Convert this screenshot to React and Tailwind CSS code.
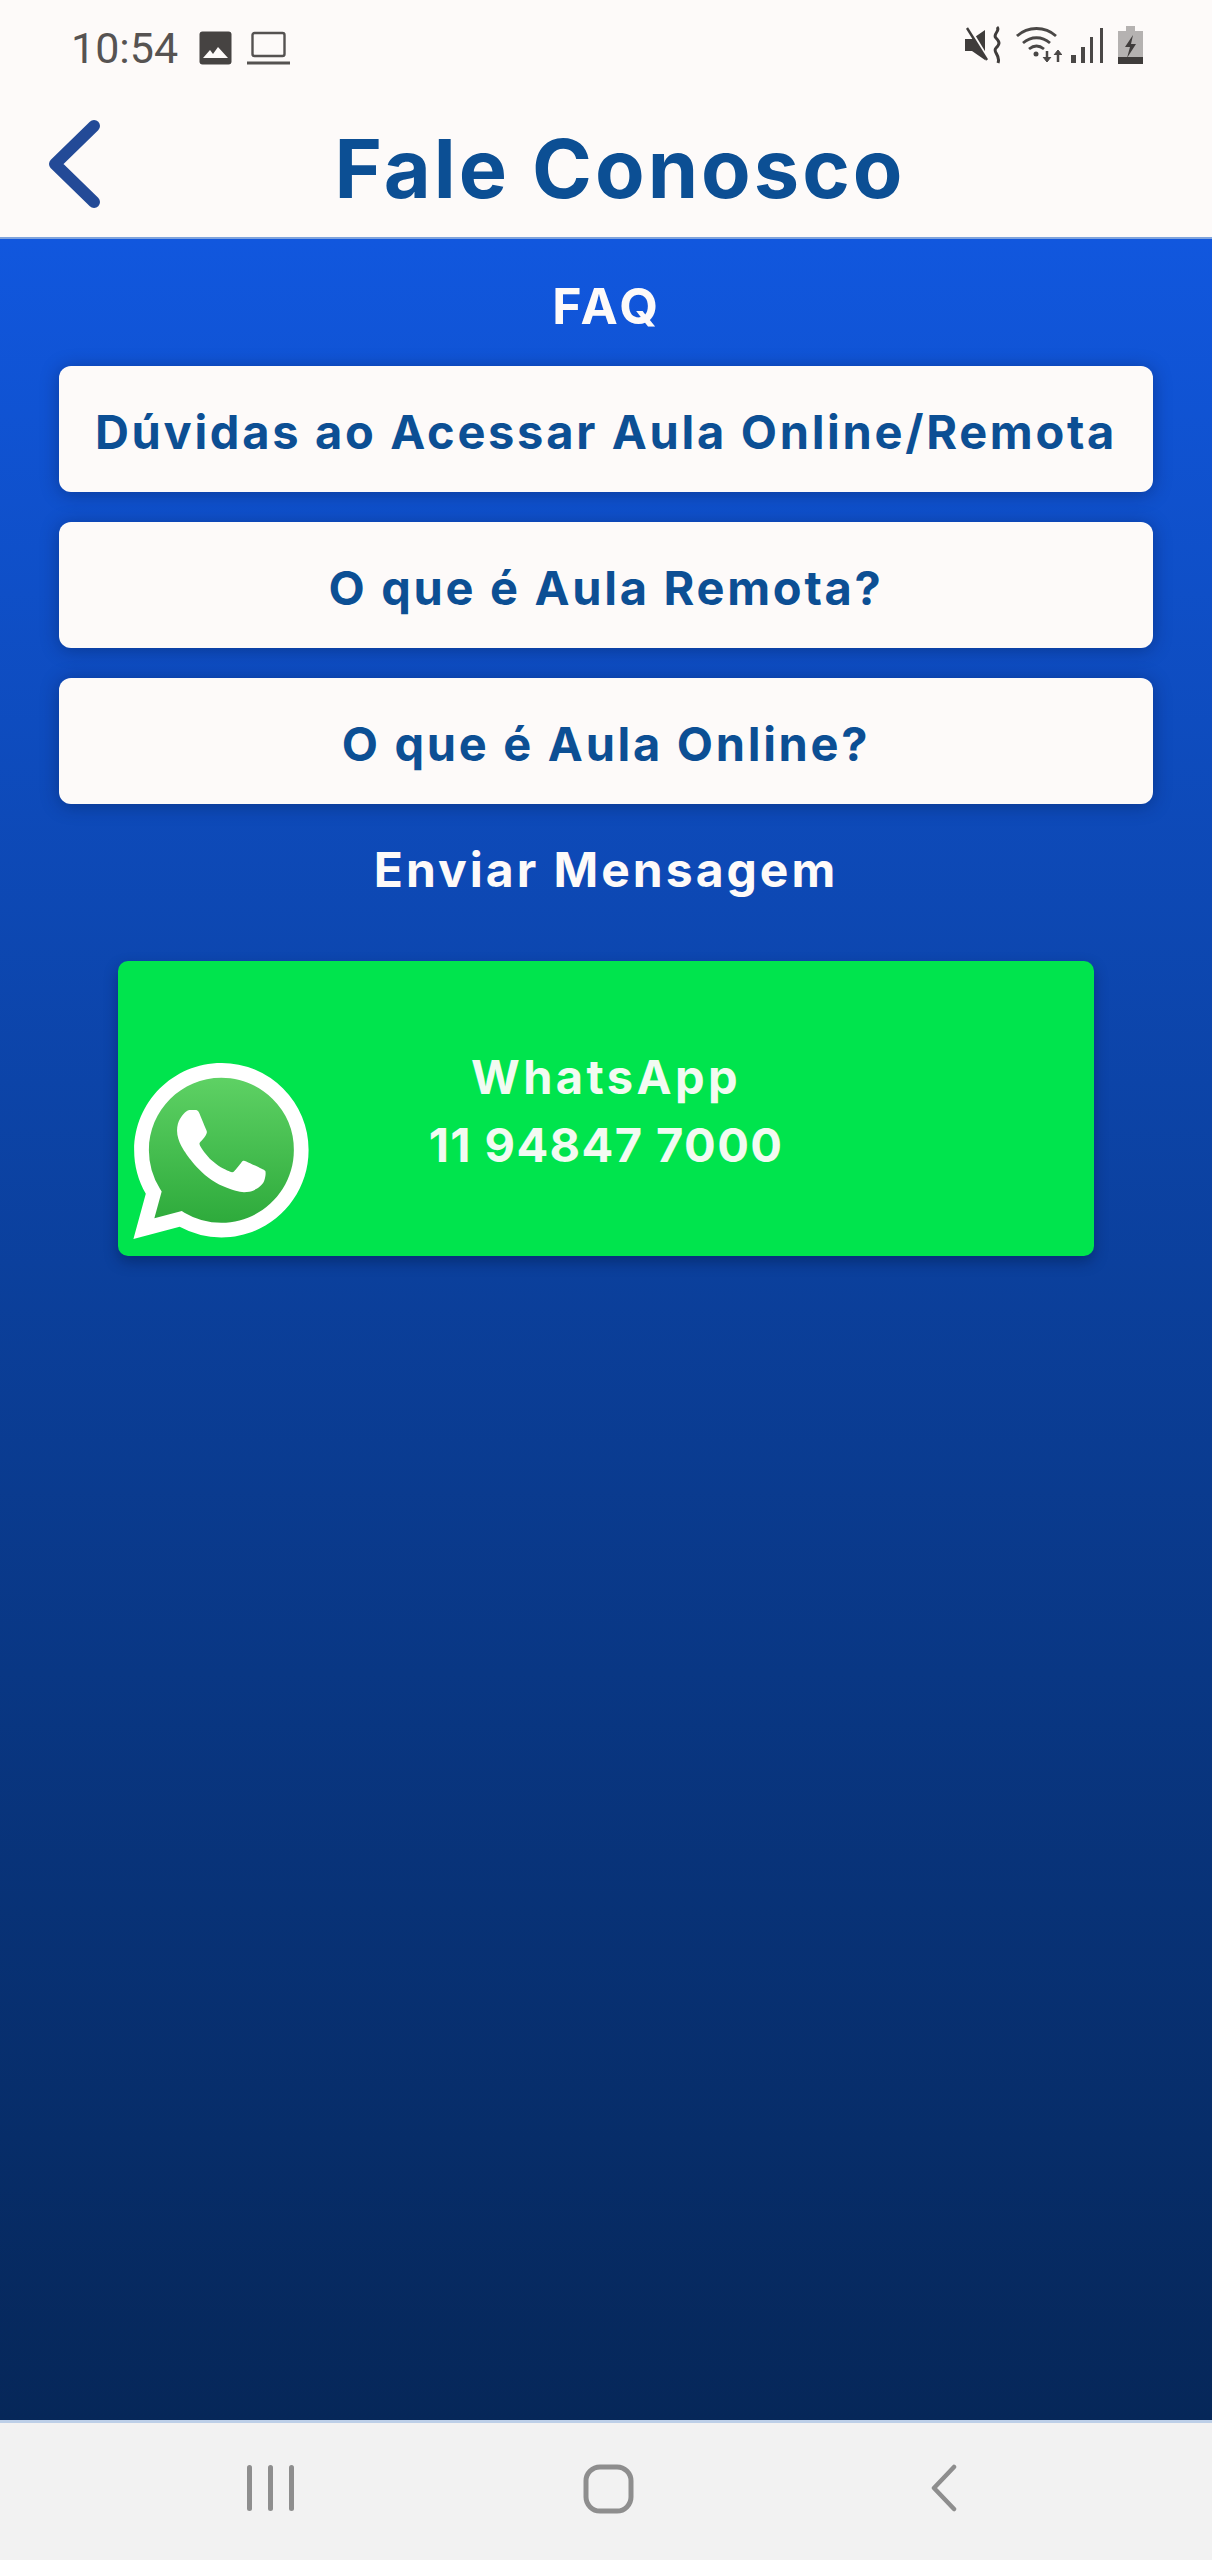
const FONT = "font-['Inter','Liberation_Sans',sans-serif]";

function ImageIcon() {
  return (
    <svg width="33" height="34" viewBox="0 0 33 34" fill="none">
      <rect x="0.500" y="0.500" width="32" height="33" rx="3" fill="#464342" />
      <path d="M4 27l7-8 3 4 5-7 10 11z" fill="#fdfaf9" />
    </svg>
  );
}

function LaptopIcon() {
  return (
    <svg width="43" height="34" viewBox="0 0 43 34" fill="none" stroke="#555251">
      <rect x="5.500" y="2" width="32" height="23" rx="2" strokeWidth="2.400" />
      <path d="M0 32h43" strokeWidth="3" />
    </svg>
  );
}

function StatusRight() {
  return (
    <div className="flex items-center">
      <svg width="38" height="38" viewBox="0 0 38 38" fill="#3f3c3b">
        <path d="M1 13h7l13-9v30L8 25H1z" />
        <path d="M6 3l17 28" stroke="#fdfaf9" strokeWidth="2.500" />
        <path d="M3 2l20 32" stroke="#3f3c3b" strokeWidth="2.400" />
        <path d="M33 1c4 4-5 7-1 11s4 6 0 10 5 7 2 15" fill="none" stroke="#3f3c3b" strokeWidth="3" />
      </svg>
      <svg width="46" height="38" viewBox="0 0 46 38" fill="none" stroke="#4a4746" strokeWidth="2.800" className="ml-[14px]">
        <path d="M1 10c11-10 28-10 39 0" />
        <path d="M7 17c8-7 19-7 27 0" />
        <path d="M13 23c5-4 10-4 15 0" />
        <circle cx="20" cy="28" r="2.500" fill="#4a4746" stroke="none" />
        <path d="M31 25v9" strokeWidth="2.500" />
        <path d="M27 31l4 5 4-5" fill="#4a4746" strokeWidth="1" />
        <path d="M42 36v-8" strokeWidth="2.500" />
        <path d="M38 29l4-5 4 5" fill="#4a4746" strokeWidth="1" />
      </svg>
      <svg width="33" height="36" viewBox="0 0 33 36" fill="#4a4746" className="ml-[9px]">
        <rect x="0" y="28" width="5" height="8" />
        <rect x="10" y="20" width="4" height="16" />
        <rect x="19" y="10" width="3" height="26" />
        <rect x="29" y="1" width="3" height="35" />
      </svg>
      <svg width="25" height="38" viewBox="0 0 25 38" className="ml-[14px]">
        <rect x="8" y="0" width="9" height="5" fill="#b5b2b1" />
        <rect x="0" y="5" width="25" height="33" fill="#b5b2b1" />
        <rect x="0" y="31" width="25" height="7" fill="#3f3c3b" />
        <path d="M15 9l-8 12h5l-3 11 9-14h-5z" fill="#3f3c3b" />
      </svg>
    </div>
  );
}

function FaqButton({ children }) {
  return (
    <button className="h-[126px] w-full rounded-[12px] bg-[#fdfaf9] pt-[6px] text-[47px] font-bold tracking-[2.700px] text-[#0c4f94] shadow-[0_2px_18px_rgba(5,25,70,0.4)]">
      {children}
    </button>
  );
}

function WhatsAppLogo() {
  return (
    <svg width="176" height="176" viewBox="0 0 24 24">
      <defs>
        <linearGradient id="wa" x1="0" y1="0" x2="0" y2="1">
          <stop offset="0" stopColor="#5fd265" />
          <stop offset="1" stopColor="#2ca93a" />
        </linearGradient>
      </defs>
      <path d="M12 1.600c-5.800 0-10.400 4.600-10.400 10.300 0 2 .6 3.900 1.600 5.600L1.600 22.500l5.200-1.400c1.600.9 3.300 1.300 5.200 1.300 5.800 0 10.400-4.600 10.400-10.400S17.800 1.600 12 1.600z" fill="url(#wa)" />
      <path
        fill="#fff"
        d="M17.472 14.382c-.297-.149-1.758-.867-2.03-.967-.273-.099-.471-.148-.67.15-.197.297-.767.966-.94 1.164-.173.199-.347.223-.644.075-.297-.15-1.255-.463-2.39-1.475-.883-.788-1.48-1.761-1.653-2.059-.173-.297-.018-.458.13-.606.134-.133.298-.347.446-.52.149-.174.198-.298.298-.497.099-.198.05-.371-.025-.52-.075-.149-.669-1.612-.916-2.207-.242-.579-.487-.5-.669-.51-.173-.008-.371-.01-.57-.01-.198 0-.52.074-.792.372-.272.297-1.04 1.016-1.04 2.479 0 1.462 1.065 2.875 1.213 3.074.149.198 2.096 3.2 5.077 4.487.709.306 1.262.489 1.694.625.712.227 1.36.195 1.871.118.571-.085 1.758-.719 2.006-1.413.248-.694.248-1.289.173-1.413-.074-.124-.272-.198-.57-.347m-5.421 7.403h-.004a9.87 9.87 0 01-5.031-1.378l-.361-.214-3.741.982.998-3.648-.235-.374a9.86 9.86 0 01-1.51-5.26c.001-5.45 4.436-9.884 9.888-9.884 2.64 0 5.122 1.03 6.988 2.898a9.825 9.825 0 012.893 6.994c-.003 5.45-4.437 9.884-9.885 9.884m8.413-18.297A11.815 11.815 0 0012.05 0C5.495 0 .16 5.335.157 11.892c0 2.096.547 4.142 1.588 5.945L.057 24l6.305-1.654a11.882 11.882 0 005.683 1.448h.005c6.554 0 11.89-5.335 11.893-11.893a11.821 11.821 0 00-3.48-8.413z"
      />
    </svg>
  );
}

export default function App() {
  return (
    <div className={`flex h-[2560px] w-[1212px] flex-col overflow-hidden bg-[#f2f2f2] ${FONT}`}>
      <header className="h-[239px] shrink-0 border-b-2 border-[#7fa3dc] bg-[#fdfaf9]">
        <div className="flex h-[94px] items-start justify-between pl-[71px] pr-[69px] pt-[26px]">
          <div className="flex items-center">
            <span className="font-['Roboto',sans-serif] text-[43px] leading-[44px] text-[#565352]">10:54</span>
            <span className="ml-[21px] flex">
              <ImageIcon />
            </span>
            <span className="ml-[15px] flex">
              <LaptopIcon />
            </span>
          </div>
          <StatusRight />
        </div>
        <div className="flex items-start pl-[46px]">
          <svg width="56" height="92" viewBox="0 0 56 92" fill="none" className="mt-[25px] shrink-0">
            <path d="M48 7L9 45l39 38" stroke="#234a97" strokeWidth="12" strokeLinecap="round" strokeLinejoin="round" />
          </svg>
          <h1 className="ml-[18px] w-[1000px] pt-[3px] text-center text-[81px] font-bold leading-[144px] tracking-[3px] text-[#0c4f94]">
            Fale Conosco
          </h1>
        </div>
      </header>

      <main className="flex flex-1 flex-col items-center bg-gradient-to-b from-[#1157de] to-[#062759] px-[59px]">
        <h2 className="mt-[39px] pl-[2px] text-[50px] font-bold leading-[56px] tracking-[3.500px] text-[#fdfaf9]">FAQ</h2>
        <div className="mt-[32px] flex w-full flex-col gap-[30px]">
          <FaqButton>Dúvidas ao Acessar Aula Online/Remota</FaqButton>
          <FaqButton>O que é Aula Remota?</FaqButton>
          <FaqButton>O que é Aula Online?</FaqButton>
        </div>
        <h2 className="mt-[38px] text-[48px] font-bold leading-[56px] tracking-[3px] text-[#fdfaf9]">Enviar Mensagem</h2>
        <button className="mt-[63px] grid h-[295px] w-[976px] grid-cols-[1fr_auto_1fr] items-center rounded-[10px] bg-[#00e44d] shadow-[0_6px_14px_rgba(3,20,60,0.4)]">
          <span className="mt-[84px] flex pl-[15px]">
            <WhatsAppLogo />
          </span>
          <span className="pt-[4px] text-center font-bold leading-[68px] text-[#f2fbf2]">
            <span className="block text-[47px] tracking-[3.400px]">WhatsApp</span>
            <span className="block text-[47px] tracking-[1.400px]">11 94847 7000</span>
          </span>
          <span />
        </button>
      </main>

      <nav className="flex h-[140px] shrink-0 items-start border-t-[3px] border-[#bccfe8] pl-[247px] pt-[41px]">
        <svg width="47" height="48" viewBox="0 0 47 48" fill="#8e8e8e">
          <rect x="0" y="1" width="5" height="46" rx="2.500" />
          <rect x="21" y="1" width="5" height="46" rx="2.500" />
          <rect x="42" y="1" width="5" height="46" rx="2.500" />
        </svg>
        <svg width="51" height="50" viewBox="0 0 51 50" fill="none" className="ml-[289px]">
          <rect x="3" y="3" width="45" height="44" rx="14" stroke="#8e8e8e" strokeWidth="5" />
        </svg>
        <svg width="27" height="48" viewBox="0 0 27 48" fill="none" className="ml-[296px]">
          <path d="M24 3L4 24l20 21" stroke="#8e8e8e" strokeWidth="4.500" strokeLinecap="round" strokeLinejoin="round" />
        </svg>
      </nav>
    </div>
  );
}
